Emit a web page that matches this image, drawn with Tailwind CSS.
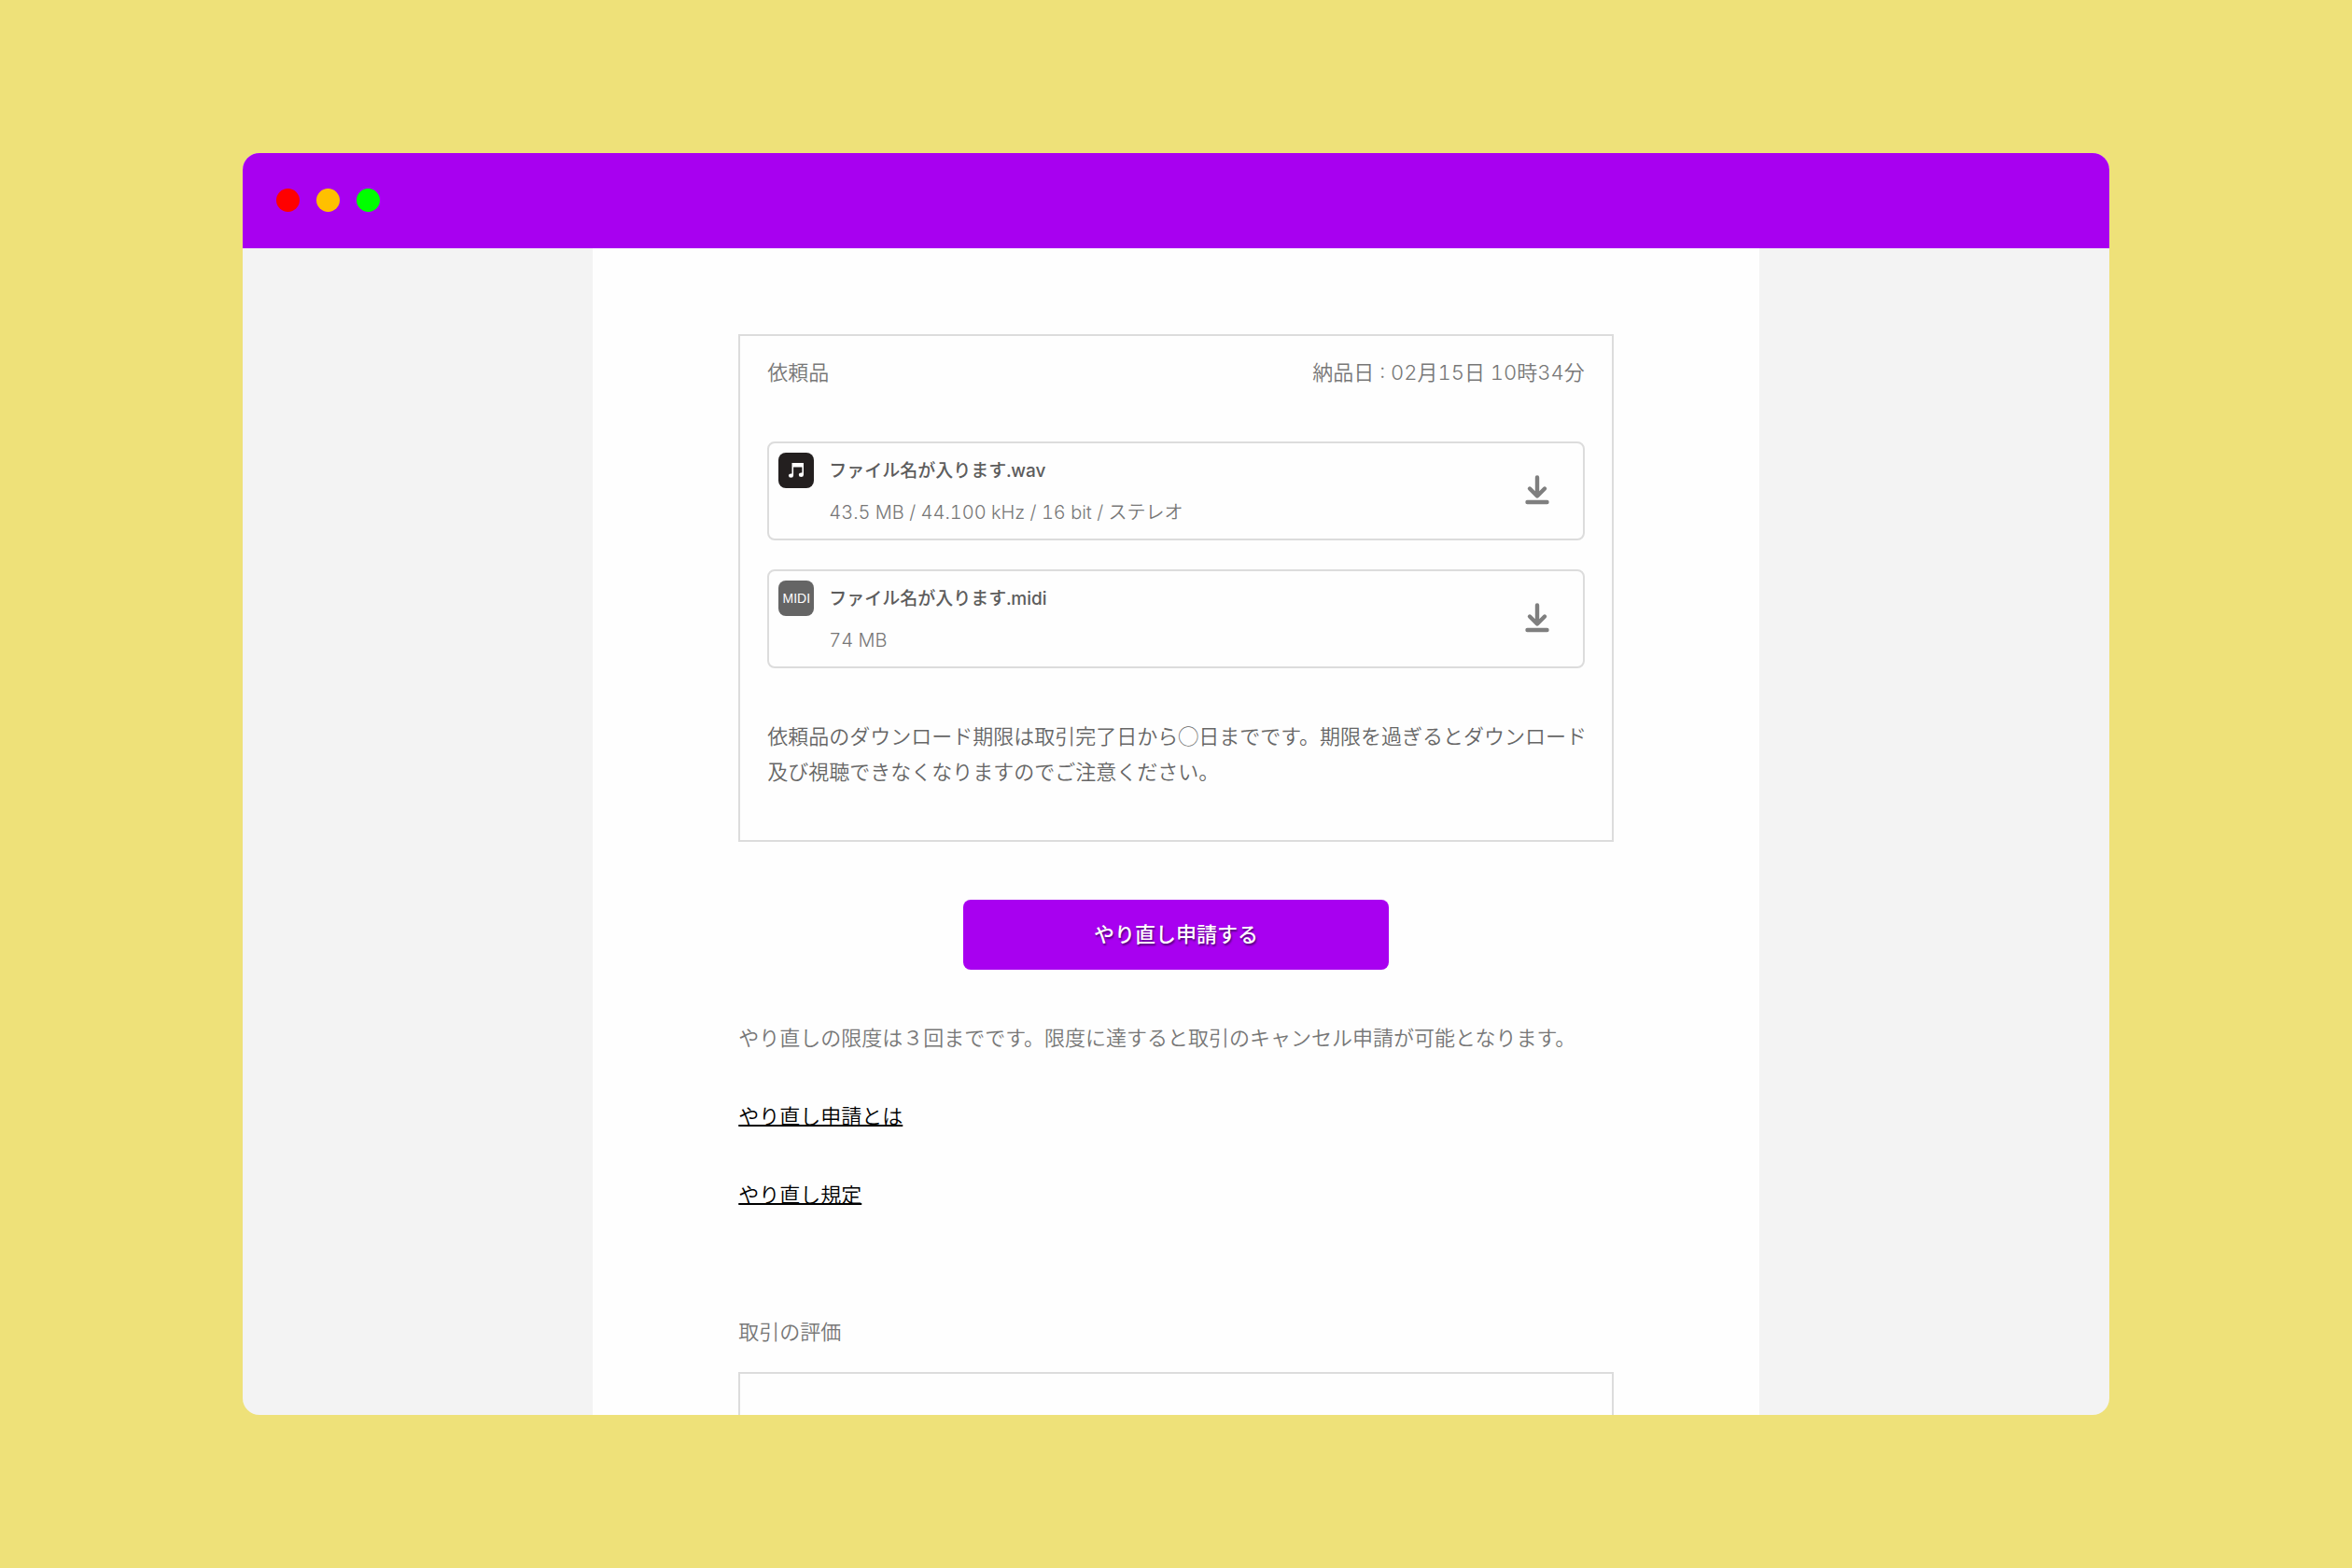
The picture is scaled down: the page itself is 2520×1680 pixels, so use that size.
<!DOCTYPE html>
<html lang="ja">
<head>
<meta charset="utf-8">
<meta name="viewport" content="width=device-width, initial-scale=1">
<title>依頼品</title>
<script src="https://cdn.jsdelivr.net/npm/@tailwindcss/browser@4"></script>
</head>
<body class="flex h-screen justify-center bg-[#eee179] py-[164px] font-['Inter','Noto_Sans_CJK_JP',sans-serif] text-[22px] leading-[38px] font-[350] text-[#777] tabular-nums">
  <div class="flex w-full max-w-[2000px] flex-col overflow-hidden rounded-[18px] bg-[#f3f3f3]">
    <header class="flex h-[102px] shrink-0 items-center gap-[18px] bg-[#a800f0] pb-0.5 pl-9">
      <span class="size-[25px] rounded-full bg-[#ff0000]"></span>
      <span class="size-[25px] rounded-full bg-[#ffc000]"></span>
      <span class="size-[25px] rounded-full bg-[#00ff00]"></span>
    </header>
    <main class="mx-auto flex min-h-0 w-5/8 flex-1 flex-col items-center overflow-hidden bg-[#fefefe] pt-[92px]">
      <div class="w-3/4">
        <section class="border-2 border-[#dcdcdc] px-[29px] pt-5 pb-[56px]">
          <div class="flex justify-between">
            <h2>依頼品</h2>
            <p>納品日 : 02月15日 10時34分</p>
          </div>
          <ul class="mt-[55px] flex flex-col gap-[31px] leading-10">
            <li class="flex items-center rounded-lg border-2 border-[#dcdcdc] pt-[10px] pr-9 pb-2 pl-[10px]">
              <span class="flex size-[38px] items-center justify-center self-start rounded-lg bg-[#231f1f]">
                <svg class="size-[18px]" viewBox="0 0 18 18" fill="#fff" aria-hidden="true">
                  <path d="M4.5 1H17v12.800a2.600 2.200 0 1 1-2.600-2.200h1V5.600H6.100v9a2.600 2.200 0 1 1-2.600-2.200h1z"/>
                </svg>
              </span>
              <div class="ml-4 flex flex-1 flex-col gap-1">
                <p class="text-[19px] font-medium text-[#5c5c5c]">ファイル名が入ります.wav</p>
                <p class="text-xl/10">43.5 MB / 44.100 kHz / 16 bit / ステレオ</p>
              </div>
              <button type="button" class="pb-1" aria-label="ダウンロード">
                <svg class="h-8 w-[26px]" viewBox="0 0 26 32" fill="none" stroke="#7f7f7f" stroke-width="4.400" stroke-linecap="round" stroke-linejoin="round" aria-hidden="true">
                  <path d="M13 2.500v19M5 14.500l8 8 8-8M2.500 29h21"/>
                </svg>
              </button>
            </li>
            <li class="flex items-center rounded-lg border-2 border-[#dcdcdc] pt-[10px] pr-9 pb-2 pl-[10px]">
              <span class="flex size-[38px] items-center justify-center self-start rounded-lg bg-[#656565] font-['Liberation_Sans',sans-serif] text-[14px] font-normal text-white">MIDI</span>
              <div class="ml-4 flex flex-1 flex-col gap-1">
                <p class="text-[19px] font-medium text-[#5c5c5c]">ファイル名が入ります.midi</p>
                <p class="text-xl/10">74 MB</p>
              </div>
              <button type="button" class="pb-1" aria-label="ダウンロード">
                <svg class="h-8 w-[26px]" viewBox="0 0 26 32" fill="none" stroke="#7f7f7f" stroke-width="4.400" stroke-linecap="round" stroke-linejoin="round" aria-hidden="true">
                  <path d="M13 2.500v19M5 14.500l8 8 8-8M2.500 29h21"/>
                </svg>
              </button>
            </li>
          </ul>
          <p class="mt-[52px] font-['Noto_Sans_CJK_JP',sans-serif] whitespace-nowrap text-[#666]">依頼品のダウンロード期限は取引完了日から◯日までです。期限を過ぎるとダウンロード<br>及び視聴できなくなりますのでご注意ください。</p>
        </section>
        <button type="button" class="mx-auto mt-[62px] block h-[75px] w-[456px] rounded-lg bg-[#a800f0] pb-0.5 font-medium text-white [text-shadow:1px_2px_2px_rgb(0_0_0/0.5)]">やり直し申請する</button>
        <p class="mt-[54px] whitespace-nowrap">やり直しの限度は３回までです。限度に達すると取引のキャンセル申請が可能となります。</p>
        <p class="mt-[46px]"><a href="#" class="text-black underline decoration-2">やり直し申請とは</a></p>
        <p class="mt-[46px]"><a href="#" class="text-black underline decoration-2">やり直し規定</a></p>
        <h2 class="mt-[109px]">取引の評価</h2>
        <section class="mt-6 h-64 border-2 border-[#dcdcdc]"></section>
      </div>
    </main>
  </div>
</body>
</html>
